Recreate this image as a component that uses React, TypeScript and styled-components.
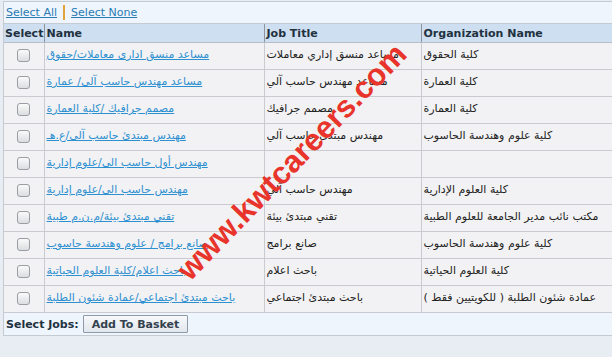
import styled, { createGlobalStyle } from "styled-components";

interface Job {
  name: string;
  title: string;
  org: string;
}

const jobs: Job[] = [
  { name: "مساعد منسق اداری معاملات/حقوق", title: "مساعد منسق إداري معاملات", org: "كلية الحقوق" },
  { name: "مساعد مهندس حاسب آلی/ عمارة", title: "مساعد مهندس حاسب آلي", org: "كلية العمارة" },
  { name: "مصمم جرافيك /كلية العمارة", title: "مصمم جرافيك", org: "كلية العمارة" },
  { name: "مهندس مبتدئ حاسب آلی/ع.هـ", title: "مهندس مبتدئ حاسب آلي", org: "كلية علوم وهندسة الحاسوب" },
  { name: "مهندس أول حاسب الى/علوم إدارية", title: "", org: "" },
  { name: "مهندس حاسب الى/علوم إدارية", title: "مهندس حاسب آلي", org: "كلية العلوم الإدارية" },
  { name: "تقني مبتدئ بيئة/م.ن.م طبية", title: "تقني مبتدئ بيئة", org: "مكتب نائب مدير الجامعة للعلوم الطبية" },
  { name: "صانع برامج / علوم وهندسة حاسوب", title: "صانع برامج", org: "كلية علوم وهندسة الحاسوب" },
  { name: "باحث اعلام/كلية العلوم الحياتية", title: "باحث اعلام", org: "كلية العلوم الحياتية" },
  { name: "باحث مبتدئ اجتماعي/عمادة شئون الطلبة", title: "باحث مبتدئ اجتماعي", org: "عمادة شئون الطلبة ( للكويتيين فقط )" },
];

const App = () => {
  return (
    <Page>
      <GlobalStyle />
      <Frame>
        <TopBar>
          <LinkText>Select All</LinkText>
          <Divider />
          <LinkText>Select None</LinkText>
        </TopBar>
        <Table>
          <colgroup>
            <col style={{ width: 40 }} />
            <col style={{ width: 220 }} />
            <col style={{ width: 157 }} />
            <col />
          </colgroup>
          <thead>
            <tr>
              <Th>Select</Th>
              <Th>Name</Th>
              <Th>Job Title</Th>
              <Th>Organization Name</Th>
            </tr>
          </thead>
          <tbody>
            {jobs.map((job, i) => (
              <tr key={i}>
                <CheckCell>
                  <Box />
                </CheckCell>
                <Td>
                  <ArabicLink dir="rtl">{job.name}</ArabicLink>
                </Td>
                <Td>
                  <Arabic dir="rtl">{job.title}</Arabic>
                </Td>
                <Td>
                  <Arabic dir="rtl">{job.org}</Arabic>
                </Td>
              </tr>
            ))}
          </tbody>
        </Table>
        <Footer>
          <Bold>Select Jobs:</Bold>
          <Button>Add To Basket</Button>
        </Footer>
        <Watermark>www.kwtcareers.com</Watermark>
      </Frame>
    </Page>
  );
};

export default App;



const GlobalStyle = createGlobalStyle`
body {
  margin: 0;
  background: #e8ecf3;
  font-family: "DejaVu Sans", Verdana, sans-serif;
  font-size: 11px;
  overflow: hidden;
}
`

const Page = styled.div`
width: 612px;
height: 357px;
overflow: hidden;
padding-top: 1px;
box-sizing: border-box;
`

const Frame = styled.div`
position: relative;
margin-left: 3px;
width: 620px;
border-top: 1px solid #c6cad1;
border-left: 1px solid #c6cad1;
`

const TopBar = styled.div`
display: flex;
align-items: center;
gap: 6px;
height: 21px;
padding-left: 2px;
background: #eef5fd;
border-bottom: 1px solid #c6cad1;
`

const LinkText = styled.a`
color: #2a7bb3;
text-decoration: underline;
cursor: pointer;
`

const Divider = styled.span`
width: 2px;
height: 15px;
background: #e3a33c;
`

const Table = styled.table`
width: 100%;
table-layout: fixed;
border-collapse: collapse;
`

const Th = styled.th`
height: 18px;
padding: 0 2px;
text-align: left;
font-weight: bold;
color: #22313f;
background: #cddff0;
border-right: 1px solid #8d949c;
border-bottom: 1px solid #b8bec6;
white-space: nowrap;
overflow: hidden;
&:first-child {
  padding: 0 0 0 1px;
}
`

const Td = styled.td`
height: 26px;
padding: 0 2px;
background: #f2f2f4;
border-right: 1px solid #c9cbd0;
border-bottom: 1px solid #c9cbd0;
vertical-align: middle;
white-space: nowrap;
overflow: hidden;
`

const CheckCell = styled(Td)`
text-align: center;
padding: 0;
`

const Box = styled.span`
display: inline-block;
width: 11px;
height: 11px;
margin-top: 2px;
border: 1px solid #9a9da2;
border-radius: 3px;
background: linear-gradient(#fafafa, #dcdde0);
`

const Arabic = styled.span`
display: inline-block;
font-family: "DejaVu Sans", sans-serif;
font-size: 11px;
color: #222;
padding-bottom: 3px;
`

const ArabicLink = styled(Arabic)`
color: #2e90d0;
text-decoration: underline;
`

const Footer = styled.div`
display: flex;
align-items: center;
gap: 4px;
height: 22px;
padding-left: 2px;
background: #eef5fd;
border-bottom: 1px solid #c6cad1;
`

const Bold = styled.span`
font-weight: bold;
color: #22313f;
`

const Button = styled.button`
height: 18px;
padding: 0 8px;
font-family: "DejaVu Sans", sans-serif;
font-size: 11px;
font-weight: bold;
color: #34414e;
background: linear-gradient(#f7f9fb, #e2e7ed);
border: 1px solid #8f9aa6;
border-radius: 1px;
`

const Watermark = styled.div`
position: absolute;
left: 128px;
top: 142px;
width: 320px;
text-align: center;
transform: rotate(-46deg);
font-family: "Liberation Sans", Arial, sans-serif;
font-size: 31px;
font-weight: bold;
color: #e8342a;
white-space: nowrap;
pointer-events: none;
`
